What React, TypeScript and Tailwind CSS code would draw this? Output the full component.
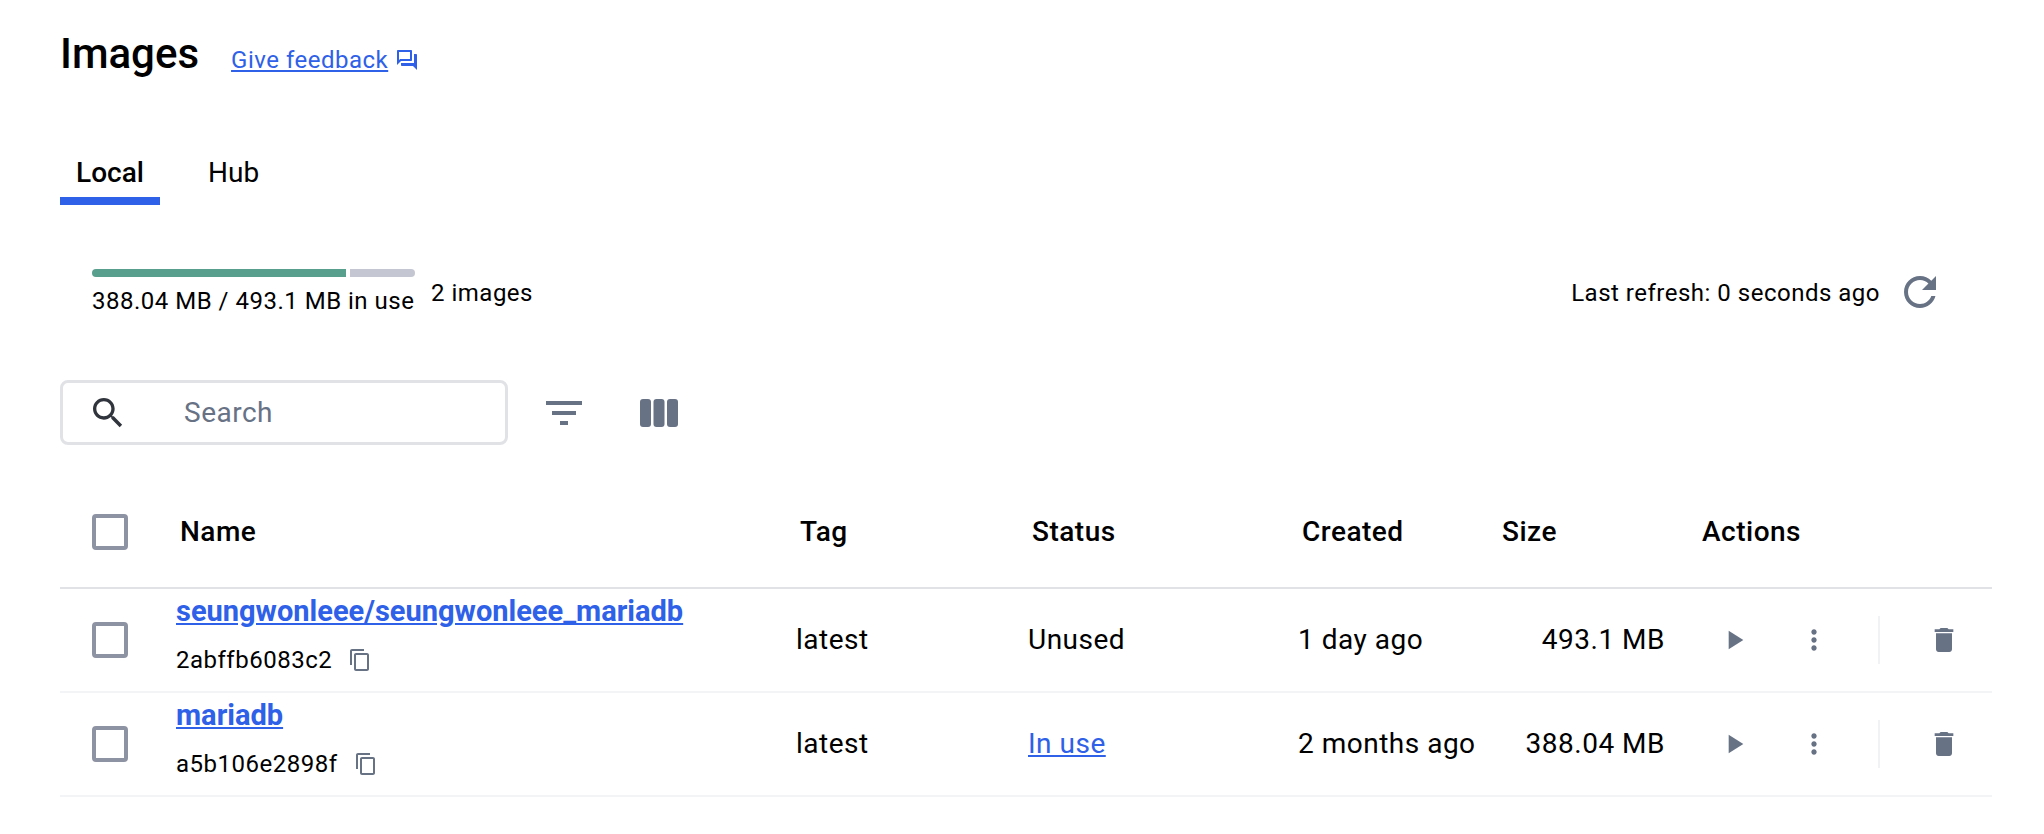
const ic = {
  forum: "M15 4v7H5.17l-.59.59-.58.58V4h11m1-2H3c-.55 0-1 .45-1 1v14l4-4h10c.55 0 1-.45 1-1V3c0-.55-.45-1-1-1zm5 4h-2v9H6v2c0 .55.45 1 1 1h11l4 4V7c0-.55-.45-1-1-1z",
  refresh: "M17.65 6.35C16.2 4.9 14.21 4 12 4c-4.42 0-7.99 3.58-7.99 8s3.57 8 7.99 8c3.73 0 6.84-2.55 7.73-6h-2.08c-.82 2.33-3.04 4-5.65 4-3.31 0-6-2.69-6-6s2.69-6 6-6c1.66 0 3.14.69 4.22 1.78L13 11h7V4l-2.35 2.35z",
  search: "M15.5 14h-.79l-.28-.27C15.41 12.59 16 11.11 16 9.5 16 5.91 13.09 3 9.5 3S3 5.91 3 9.5 5.91 16 9.5 16c1.61 0 3.09-.59 4.23-1.57l.27.28v.79l5 4.99L20.49 19l-4.99-5zm-6 0C7.01 14 5 11.99 5 9.5S7.01 5 9.5 5 14 7.01 14 9.5 11.99 14 9.5 14z",
  filter: "M10 18h4v-2h-4v2zM3 6v2h18V6H3zm3 7h12v-2H6v2z",
  copy: "M16 1H4c-1.1 0-2 .9-2 2v14h2V3h12V1zm3 4H8c-1.1 0-2 .9-2 2v14c0 1.1.9 2 2 2h11c1.1 0 2-.9 2-2V7c0-1.1-.9-2-2-2zm0 16H8V7h11v14z",
  play: "M8 5v14l11-7z",
  more: "M12 8c1.1 0 2-.9 2-2s-.9-2-2-2-2 .9-2 2 .9 2 2 2zm0 2c-1.1 0-2 .9-2 2s.9 2 2 2 2-.9 2-2-.9-2-2-2zm0 6c-1.1 0-2 .9-2 2s.9 2 2 2 2-.9 2-2-.9-2-2-2z",
  trash: "M6 19c0 1.1.9 2 2 2h8c1.1 0 2-.9 2-2V7H6v12zM19 4h-3.5l-1-1h-5l-1 1H5v2h14V4z",
};

function Icon({ d, className }: { d: string; className: string }) {
  return (
    <svg viewBox="0 0 24 24" fill="currentColor" className={className}>
      <path d={d} />
    </svg>
  );
}

function Checkbox() {
  return <div className="w-9 h-9 rounded-[4px] border-4 border-[#8d93a3] bg-white shrink-0" />;
}

const rowGrid = "grid grid-cols-[116px_620px_232px_270px_200px_167px_327px] items-center";

function Row({ name, hash, status, created, size, link }: { name: string; hash: string; status: string; created: string; size: string; link?: boolean }) {
  return (
    <div className={`${rowGrid} h-[104px] border-b-2 border-[#f3f4f6]`}>
      <div className="pl-8">
        <Checkbox />
      </div>
      <div className="flex flex-col">
        <div className="h-[34px] -mt-[12px] flex items-center">
          <a className="text-[29px] leading-[34px] font-bold text-[#2e60e8] underline">{name}</a>
        </div>
        <div className="flex items-center gap-[16px] mt-[18px] h-[28px]">
          <span className="text-[24px] tracking-[0.5px] text-black">{hash}</span>
          <Icon d={ic.copy} className="w-6 h-6 text-[#677285]" />
        </div>
      </div>
      <div className="text-[28px] tracking-[0.5px] text-black">latest</div>
      <div className={link ? "text-[28px] tracking-[0.5px] text-[#2e60e8] underline" : "text-[28px] tracking-[0.5px] text-black"}>{status}</div>
      <div className="text-[28px] tracking-[0.5px] text-black">{created}</div>
      <div className="text-[28px] tracking-[0.5px] text-black text-right">{size}</div>
      <div className="flex items-center text-[#677285]">
        <Icon d={ic.play} className="w-8 h-8 ml-[53px]" />
        <Icon d={ic.more} className="w-8 h-8 ml-[48px]" />
        <div className="w-[2px] h-12 bg-[#f1f2f4] ml-[48px]" />
        <Icon d={ic.trash} className="w-8 h-8 ml-[48px]" />
      </div>
    </div>
  );
}

export default function App() {
  return (
    <div className="w-[2044px] h-[834px] bg-white pl-[60px] pr-[52px] font-['Roboto',sans-serif] text-black overflow-hidden">
      <div className="flex items-center h-[54px] mt-[27px]">
        <h1 className="text-[42px] leading-[54px] font-medium">Images</h1>
        <a className="text-[24px] tracking-[0.5px] text-[#2e60e8] underline ml-[32px] mt-[11px]">Give feedback</a>
        <Icon d={ic.forum} className="w-6 h-6 text-[#2e60e8] ml-[7px] mt-[11px]" />
      </div>

      <div className="flex mt-[64px] h-[60px]">
        <div className="w-[100px] h-[60px] border-b-8 border-[#2e60e8] text-[28px] leading-[56px] font-medium text-center">Local</div>
        <div className="text-[28px] leading-[56px] ml-[48px]">Hub</div>
      </div>

      <div className="flex items-start mt-[64px] pl-[32px] h-[56px]">
        <div className="w-[323px]">
          <div className="flex h-2 gap-1">
            <div className="w-[254px] bg-[#599f8e] rounded-l-full" />
            <div className="w-[65px] bg-[#c4c7d1] rounded-r-full" />
          </div>
          <div className="text-[24px] leading-[30px] tracking-[0.5px] mt-[9px] whitespace-nowrap">388.04 MB / 493.1 MB in use</div>
        </div>
        <div className="text-[24px] leading-[30px] tracking-[0.5px] ml-[16px] mt-[9px]">2 images</div>
        <div className="flex-1" />
        <div className="text-[24px] leading-[30px] tracking-[0.5px] mt-[9px]">Last refresh: 0 seconds ago</div>
        <Icon d={ic.refresh} className="w-12 h-12 ml-[16px] mr-[48px] -mt-[1px] text-[#677285] shrink-0" />
      </div>

      <div className="flex items-center mt-[55px] h-[65px]">
        <div className="w-[448px] h-[65px] rounded-[8px] border-[3px] border-[#e1e2e6] flex items-center">
          <Icon d={ic.search} className="w-10 h-10 ml-[25px] text-[#30343c]" />
          <span className="text-[28px] tracking-[0.5px] text-[#677285] ml-[56px]">Search</span>
        </div>
        <Icon d={ic.filter} className="w-12 h-12 ml-[32px] text-[#677285]" />
        <svg viewBox="0 0 38 28" className="w-[38px] h-[28px] ml-[52px] text-[#677285]" fill="currentColor">
          <rect x="0" y="0" width="11" height="28" rx="3" />
          <rect x="13.5" y="0" width="11" height="28" rx="3" />
          <rect x="27" y="0" width="11" height="28" rx="3" />
        </svg>
      </div>

      <div className={`${rowGrid} mt-[32px] h-[112px] border-b-2 border-[#e1e2e6]`}>
        <div className="pl-8">
          <Checkbox />
        </div>
        <div className="pl-[4px] text-[28px] font-medium tracking-[0.5px]">Name</div>
        <div className="pl-1 text-[28px] font-medium tracking-[0.5px]">Tag</div>
        <div className="pl-1 text-[28px] font-medium tracking-[0.5px]">Status</div>
        <div className="pl-1 text-[28px] font-medium tracking-[0.5px]">Created</div>
        <div className="pl-1 text-[28px] font-medium tracking-[0.5px]">Size</div>
        <div className="pl-[37px] text-[28px] font-medium tracking-[0.5px]">Actions</div>
      </div>
      <Row name="seungwonleee/seungwonleee_mariadb" hash="2abffb6083c2" status="Unused" created="1 day ago" size="493.1 MB" />
      <Row name="mariadb" hash="a5b106e2898f" status="In use" created="2 months ago" size="388.04 MB" link />
    </div>
  );
}
